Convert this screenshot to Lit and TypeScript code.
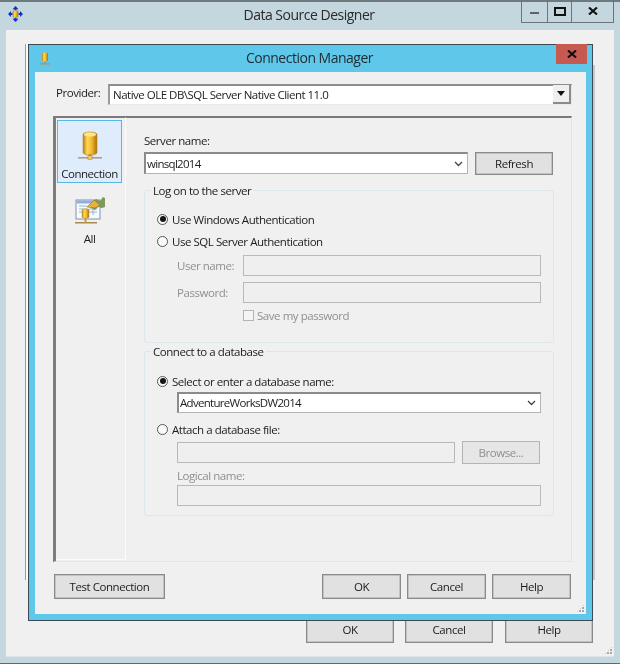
import { LitElement, html, css, svg } from "lit";
import { customElement } from "lit/decorators.js";

const cyl = (id: string) => svg`
  <defs><linearGradient id=${id} x1="0" x2="1" y1="0" y2="0">
    <stop offset="0" stop-color="#b97f10"/><stop offset=".3" stop-color="#ffd75a"/><stop offset=".6" stop-color="#f6bc2c"/><stop offset="1" stop-color="#a8720e"/>
  </linearGradient></defs>`;

const dbIcon = html`<svg width="30" height="30" viewBox="0 0 30 30">
  ${cyl("g1")}
  <path d="M8 4.500C8 3 11 2 15 2s7 1 7 2.500v18c0 1.500-3 2.500-7 2.500s-7-1-7-2.500z" fill="url(#g1)" stroke="#b98a2e" stroke-width=".6"/>
  <ellipse cx="15" cy="4.500" rx="6.200" ry="2" fill="#ffe58c"/>
  <rect x="14.200" y="24" width="1.600" height="3" fill="#9a8a70"/>
  <rect x="3" y="27" width="24" height="1.600" fill="#b89a8c"/>
  <rect x="13" y="25.600" width="4" height="3.600" fill="#f4d060" stroke="#8a7040" stroke-width=".5"/>
</svg>`;

const allIcon = html`<svg width="32" height="32" viewBox="0 0 32 32">
  ${cyl("g2")}
  <rect x="2" y="5" width="24" height="19" fill="#f6f9fd" stroke="#7d93b5"/>
  <rect x="2.500" y="5.500" width="23" height="3" fill="#8fb0dc"/>
  <path d="M5 11h8M5 14h8M5 17h6M15 11h8M15 14h8M15 17h8M19 11v9" stroke="#9db4cf" fill="none"/>
  <path d="M14 11l8-7 4 2 3-4 2 1v9l-3 1-4-1-3 3z" fill="#7d9a5a"/>
  <path d="M13 12l7-7 6 5-5 3z" fill="#e6b23a" stroke="#8a6a25" stroke-width=".5"/>
  <path d="M8 15c0-.8 1.500-1.200 3.500-1.200s3.500.4 3.500 1.200v7c0 .8-1.500 1.200-3.500 1.200S8 22.800 8 22z" fill="url(#g2)" stroke="#b98a2e" stroke-width=".4"/>
  <rect x="1" y="27" width="22" height="1.500" fill="#a8894e"/>
  <rect x="10.500" y="23" width="2" height="5" fill="#c79a3a"/>
</svg>`;

const appIcon = html`<svg width="15" height="16" viewBox="0 0 15 16">
  ${cyl("g3")}
  <path fill="#0a30d8" d="M7.500 0l3 3.200H8.500V4.500h-2V3.200h-2zM7.500 16l-3-3.200h2v-1.300h2v1.300h2zM0 8l3-3v2h1.500v2H3v2zM15 8l-3 3V9h-1.500V7H12V5z"/>
  <path d="M4.800 5.500c0-.7 1.200-1 2.700-1s2.700.3 2.700 1v5c0 .7-1.200 1-2.700 1s-2.700-.3-2.700-1z" fill="url(#g3)" stroke="#b08a30" stroke-width=".4"/>
</svg>`;

const smallDb = html`<svg width="10" height="13" viewBox="0 0 10 13">
  ${cyl("g4")}
  <path d="M2 1.500C2 .8 3.300.4 5 .4s3 .4 3 1.100v7c0 .7-1.300 1.100-3 1.100s-3-.4-3-1.100z" fill="url(#g4)"/>
  <rect x="4.500" y="9.500" width="1" height="2" fill="#a08050"/>
  <rect x="0" y="11.300" width="10" height="1.200" fill="#b0906a"/>
</svg>`;

const xGlyph = html`<svg width="10" height="8" viewBox="0 0 10 8"><path d="M1 .5l8 7M9 .5l-8 7" stroke="#111" stroke-width="2.100" fill="none"/></svg>`;
const chevron = html`<svg width="9" height="6" viewBox="0 0 9 6"><path d="M1 1l3.500 3.500L8 1" stroke="#444" stroke-width="1.300" fill="none"/></svg>`;

@customElement("app-root")
export class AppRoot extends LitElement {
  static styles = css`
    :host {
      display: block; width: 620px; height: 664px; position: relative; overflow: hidden;
      font-family: "Open Sans", "Noto Sans", sans-serif; font-size: 11.5px; letter-spacing: -0.45px; color: #1c1c1c;
      background: #c4d7de;
    }
    .scene { width: 620px; height: 664px; position: relative; filter: blur(0.3px); }
    /* outer window */
    .outer { box-sizing: border-box; height: 664px; display: flex; flex-direction: column;
      border-top: 2px solid #6f7a80; border-bottom: 1px solid #5b6970; background: #c4d7de; }
    .outer-title { height: 28px; flex: none; display: flex; align-items: center; padding-left: 8px; position: relative; }
    .outer-title .t { position: absolute; left: 0; right: 2px; top: 3px; text-align: center; font-size: 14px; letter-spacing: -0.5px; color: #2a2a2a; }
    .outer-icon { display: block; margin-top: -1px; }
    .caps { position: absolute; left: 521px; top: -2px; width: 93px; height: 23px; box-sizing: border-box; display: flex;
      border: 1px solid #69757b; border-top: 0; }
    .cap { display: flex; align-items: center; justify-content: center; border-right: 1px solid #69757b; }
    .cap:last-child { border-right: 0; }
    .min { width: 25px; } .max { width: 23px; } .cls { flex: 1; }
    .min i { width: 9px; height: 2px; background: #5a6468; margin-top: 3px; }
    .max i { width: 8px; height: 5px; border: 2px solid #111; }
    .outer-client { flex: 1; margin: 0 6px 6px 6px; background: #f0f0f0; border-bottom: 1px solid #dfe6e9; position: relative;
      display: flex; justify-content: flex-end; align-items: flex-end; gap: 11px; padding: 0 21px 13px 0; box-sizing: border-box; }
    .outer-client .btn { height: 26px; width: 88px; padding-bottom: 2px; }
    .outer-client .btn.c { margin-right: 1px; }
    .grip { position: absolute; width: 9px; height: 9px; right: 1px; bottom: 1px;
      background: radial-gradient(circle at 1px 1px, #a9a9a9 1px, transparent 1.200px) 0 0 / 3px 3px;
      clip-path: polygon(100% 0, 100% 100%, 0 100%); }

    .btn { box-sizing: border-box; background: #e1e1e1; border: 1px solid #8a8a8a; box-shadow: inset 0 0 0 .5px #a5a5a5;
      display: flex; align-items: center; justify-content: center; color: #1c1c1c; }
    .btn.dis { color: #8f8f8f; background: #e6e6e6; border-color: #b4b4b4; box-shadow: none; }

    /* shadow artefact beside the dialog */
    .ghost { position: absolute; left: 25px; top: 44px; width: 3px; height: 536px; background: #fafafa; border-left: 1px solid #9c9c9c; box-sizing: border-box; }
    .ghost-r { position: absolute; left: 593px; top: 65px; width: 2px; height: 515px; background: #c9c9c9; }
    /* dialog */
    .dialog { position: absolute; left: 28px; top: 44px; width: 565px; height: 577px; box-sizing: border-box;
      border: 1px solid #3c4a52; background: #5fc8ea; display: flex; flex-direction: column; }
    .d-title { height: 27px; flex: none; position: relative; display: flex; align-items: center; padding-left: 11px; }
    .d-title .t { position: absolute; left: 0; right: 2px; top: 3px; text-align: center; font-size: 14px; letter-spacing: -0.5px; color: #1f2a30; }
    .d-close { position: absolute; right: 5px; top: -1px; width: 31px; height: 20px; background: #c75a50; display: flex; align-items: center; justify-content: center; }
    .d-client { flex: 1; margin: 0 6px 6px 6px; background: #f0f0f0; position: relative; display: flex; flex-direction: column;
      padding: 12px 14px 15px 18px; box-sizing: border-box; }

    .provider { display: flex; align-items: center; gap: 8px; height: 21px; padding-left: 3px; }
    .provider label { width: 44px; margin-top: -4px; }
    .combo { box-sizing: border-box; background: #fff; display: flex; align-items: center; }
    .provider .combo { flex: 1; height: 21px; border-top: 2px solid #8c8c8c; border-left: 2px solid #9a9a9a; border-bottom: 1px solid #e9e9e9; border-right: 1px solid #e9e9e9; padding-left: 3px; justify-content: space-between; }
    .provider .combo span { margin-top: -1px; letter-spacing: -0.5px; }
    .drop { width: 18px; height: 19px; background: #efefef; border-right: 2px solid #8a8a8a; border-bottom: 2px solid #8a8a8a; box-sizing: border-box; display: flex; align-items: center; justify-content: center; margin-top: -1px; }
    .drop i { width: 0; height: 0; border: 4.500px solid transparent; border-top: 5px solid #111; border-bottom: 0; }

    .panel { flex: 1; margin-top: 11px; display: flex; border-top: 2px solid #7a7a7a; border-left: 3px solid #7d7d7d; border-right: 1px solid #e4e4e4; border-bottom: 1px solid #e4e4e4; }
    .rail { width: 70px; flex: none; border-right: 1px solid #fbfbfb; border-bottom: 1px solid #fbfbfb; margin-bottom: 1px; padding: 2px 0 0 1px; box-sizing: border-box; border-top: 1px solid #7a7a7a; margin-top: -1px; }
    .tab { width: 65px; height: 63px; box-sizing: border-box; display: flex; flex-direction: column; align-items: center; }
    .tab.sel { background: #deecfc; border: 1px solid #58b7e3; padding-top: 9px; }
    .tab svg { display: block; }
    .tab span { margin-top: 6px; line-height: 15px; }
    .tab.all { margin-top: 12px; padding-top: 0; }
    .tab.all span { margin-top: 4px; }

    .form { flex: 1; padding: 15px 17px 0 18px; box-sizing: border-box; min-width: 0; }
    .lbl { line-height: 16px; }
    .server { display: grid; grid-template-columns: 324px 78px; gap: 7px; margin-top: 3px; align-items: start; }
    .field { height: 22px; box-sizing: border-box; background: #fff; border-style: solid; border-width: 2px 1px 1px 2px; border-color: #8b8b8b #b5b5b5 #b5b5b5 #8b8b8b; padding: 0 4px 0 1px; display: flex; align-items: center; justify-content: space-between; }
    .field span { margin-top: -1px; letter-spacing: -0.7px; }
    .field.off { background: #efefef; border: 1px solid #b9b9b9; }
    .server .btn { height: 23px; }

    .group { border: 1px solid #dde6eb; border-radius: 3px; box-sizing: border-box; padding: 0 12px; }
    .legend { display: block; width: max-content; background: #f0f0f0; margin: -8px 0 0 -6px; padding: 0 2px; line-height: 16px; }
    .g1 { height: 153px; margin-top: 15px; }
    .g2 { height: 165px; margin-top: 8px; }

    .radio { display: flex; align-items: center; gap: 4px; height: 16px; }
    .radio i { width: 11px; height: 11px; border-radius: 50%; border: 1px solid #555; box-sizing: border-box; background: #fbfbfb; position: relative; display: flex; align-items: center; justify-content: center; }
    .radio.on i::after { content: ""; width: 6px; height: 6px; border-radius: 50%; background: #151515; }
    .g1 .r1 { margin-top: 12px; }
    .g1 .r2 { margin-top: 6px; }
    .creds { margin: 6px 0 0 20px; display: grid; grid-template-columns: 66px 298px; row-gap: 6px; align-items: center; }
    .creds .lab { color: #8f8f8f; }
    .creds .field { height: 21px; }
    .check { display: flex; align-items: center; gap: 3px; color: #8f8f8f; margin: 6px 0 0 86px; height: 12px; }
    .check i { width: 11px; height: 11px; box-sizing: border-box; border: 1px solid #b4b4b4; background: #f4f4f4; }

    .g2 .r1 { margin-top: 13px; }
    .indent { margin-left: 20px; }
    .g2 .field.db { width: 364px; margin-top: 3px; height: 21px; }
    .g2 .r2 { margin-top: 8px; }
    .attach { display: grid; grid-template-columns: 278px 78px; gap: 7px; margin-top: 4px; align-items: center; }
    .attach .field { height: 21px; }
    .attach .btn { height: 23px; }
    .g2 .lab { color: #8f8f8f; margin-top: 4px; line-height: 16px; }
    .g2 .field.ln { width: 364px; height: 21px; margin-top: 1px; }

    .foot { display: flex; gap: 6px; margin: 12px 1px 0 1px; height: 25px; }
    .foot .btn { width: 79px; }
    .foot .btn.test { width: 111px; margin-right: auto; }
  `;

  render() {
    return html`<div class="scene">
      <div class="outer">
        <div class="outer-title">
          <span class="outer-icon">${appIcon}</span>
          <div class="t">Data Source Designer</div>
          <div class="caps">
            <div class="cap min"><i></i></div>
            <div class="cap max"><i></i></div>
            <div class="cap cls">${xGlyph}</div>
          </div>
        </div>
        <div class="outer-client">
          <div class="btn">OK</div>
          <div class="btn c">Cancel</div>
          <div class="btn">Help</div>
          <div class="grip"></div>
        </div>
      </div>
      <div class="ghost"></div>
      <div class="ghost-r"></div>
      <div class="dialog">
        <div class="d-title">
          ${smallDb}
          <div class="t">Connection Manager</div>
          <div class="d-close">${xGlyph}</div>
        </div>
        <div class="d-client">
          <div class="provider">
            <label>Provider:</label>
            <div class="combo"><span>Native OLE DB\\SQL Server Native Client 11.0</span><div class="drop"><i></i></div></div>
          </div>
          <div class="panel">
            <div class="rail">
              <div class="tab sel">${dbIcon}<span>Connection</span></div>
              <div class="tab all">${allIcon}<span>All</span></div>
            </div>
            <div class="form">
              <div class="lbl">Server name:</div>
              <div class="server">
                <div class="field"><span>winsql2014</span>${chevron}</div>
                <div class="btn">Refresh</div>
              </div>
              <div class="group g1">
                <span class="legend">Log on to the server</span>
                <div class="radio on r1"><i></i>Use Windows Authentication</div>
                <div class="radio r2"><i></i>Use SQL Server Authentication</div>
                <div class="creds">
                  <div class="lab">User name:</div><div class="field off"></div>
                  <div class="lab">Password:</div><div class="field off"></div>
                </div>
                <div class="check"><i></i>Save my password</div>
              </div>
              <div class="group g2">
                <span class="legend">Connect to a database</span>
                <div class="radio on r1"><i></i>Select or enter a database name:</div>
                <div class="indent field db"><span>AdventureWorksDW2014</span>${chevron}</div>
                <div class="radio r2"><i></i>Attach a database file:</div>
                <div class="indent attach">
                  <div class="field off"></div>
                  <div class="btn dis">Browse...</div>
                </div>
                <div class="indent lab">Logical name:</div>
                <div class="indent field off ln"></div>
              </div>
            </div>
          </div>
          <div class="foot">
            <div class="btn test">Test Connection</div>
            <div class="btn">OK</div>
            <div class="btn">Cancel</div>
            <div class="btn">Help</div>
          </div>
          <div class="grip"></div>
        </div>
      </div>
    </div>`;
  }
}
